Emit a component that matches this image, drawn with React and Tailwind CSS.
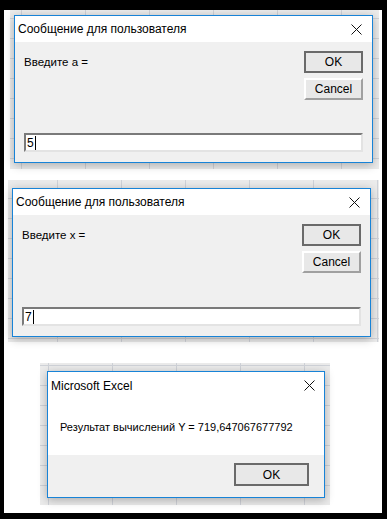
import React from 'react'

const font = "font-['Liberation_Sans','Noto_Sans',sans-serif]"
const grid =
  'bg-[#ebebeb] bg-[linear-gradient(90deg,#cfd2d8_1px,transparent_1px),linear-gradient(#cfd2d8_1px,transparent_1px)] bg-size-[64px_20px]'

const CloseX = () => (
  <svg width="11" height="11" viewBox="0 0 11 11" className="shrink-0">
    <path d="M0.5 0.5 L10.5 10.5 M10.5 0.5 L0.5 10.5" stroke="#111" strokeWidth="1" fill="none" />
  </svg>
)

const OkButton = ({ className = '' }) => (
  <div
    className={`flex items-center justify-center border-2 border-[#6a6a6a] bg-[#e8e8e8] text-[12px] text-black ${className}`}
  >
    OK
  </div>
)

const CancelButton = () => (
  <div className="flex h-[22px] w-[59px] items-center justify-center border-2 border-t-white border-l-white border-r-[#a0a0a0] border-b-[#a0a0a0] bg-[#e8e8e8] text-[12px] text-black">
    Cancel
  </div>
)

// VBA InputBox
const InputDialog = ({ label, value, height }) => (
  <div
    className={`flex w-[359px] flex-col border border-[#1883d7] bg-[#f0f0f0] shadow-[0_2px_9px_rgba(0,0,0,0.28)] ${height}`}
  >
    <div className="flex h-[26px] items-center justify-between bg-white pl-[3px] pr-[10px] text-[12px] text-black">
      <span>Сообщение для пользователя</span>
      <CloseX />
    </div>
    <div className="flex flex-1 flex-col px-[9px] pt-[9px] pb-[10px]">
      <div className="flex items-start justify-between">
        <span className="mt-[3px] text-[11.5px] text-black">{label}</span>
        <div className="flex flex-col gap-[5px]">
          <OkButton className="h-[22px] w-[59px]" />
          <CancelButton />
        </div>
      </div>
      <div className="mt-auto flex h-[19px] items-center border-2 border-t-[#7a7a7a] border-l-[#7a7a7a] border-r-[#e3e3e3] border-b-[#e3e3e3] bg-white pl-[1px] text-[12px] text-black">
        <span>{value}</span>
        <span className="ml-[1px] h-[14px] w-[1px] bg-black" />
      </div>
    </div>
  </div>
)

export default function App() {
  return (
    <div className={`h-[519px] w-[387px] bg-black pt-[10px] pl-[4px] pr-[5px] pb-[6px] ${font}`}>
      <div className="flex h-full w-full flex-col bg-white">
        {/* first input box */}
        <div className={`ml-[6px] h-[159px] w-[369px] bg-position-[11px_8px] pl-[4px] pt-[5px] ${grid}`}>
          <InputDialog label="Введите a =" value="5" height="h-[148px]" />
        </div>

        {/* second input box */}
        <div className={`mt-[11px] ml-[4px] h-[162px] w-[371px] bg-position-[49px_18px] pl-[4px] pt-[8px] ${grid}`}>
          <InputDialog label="Введите x =" value="7" height="h-[149px]" />
        </div>

        {/* result message box */}
        <div className={`mt-[21px] ml-[36px] h-[142px] w-[290px] bg-position-[8px_2px] pl-[7px] pt-[8px] ${grid}`}>
          <div className="flex h-[127px] w-[278px] flex-col border border-[#1883d7] bg-white shadow-[0_2px_9px_rgba(0,0,0,0.28)]">
            <div className="flex h-[26px] items-center justify-between pl-[3px] pr-[9px] pt-[1px] text-[12px] text-black">
              <span>Microsoft Excel</span>
              <CloseX />
            </div>
            <div className="flex flex-1 items-center pl-[12px] pt-[2px] text-[11px] text-black">
              Результат вычислений Y = 719,647067677792
            </div>
            <div className="flex h-[42px] items-start justify-end bg-[#f0f0f0] pr-[15px] pt-[8px]">
              <OkButton className="h-[23px] w-[75px]" />
            </div>
          </div>
        </div>
      </div>
    </div>
  )
}
